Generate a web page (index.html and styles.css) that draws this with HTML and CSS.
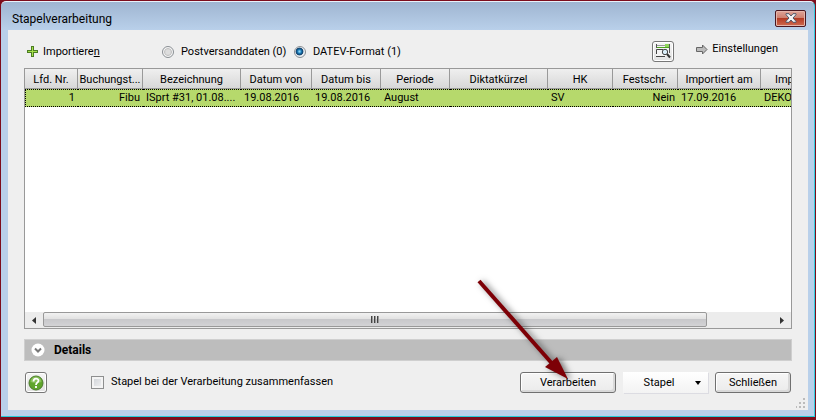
FILE: index.html
```html
<!DOCTYPE html>
<html lang="de">

<head>
    <meta charset="UTF-8">
    <meta name="viewport" content="width=device-width, initial-scale=1.0">
    <title>Stapelverarbeitung</title>
    <link rel="stylesheet" href="styles.css">
</head>

<body>
    <div class="window">
        <header class="titlebar">
            <h1 class="title">Stapelverarbeitung</h1>
            <button class="close" type="button" aria-label="Fenster schließen">
                <svg width="12" height="10" viewBox="0 0 12 10">
                    <path d="M1 .7h3L6 3 8 .7h3v1L8 5l3 3.3v1H8L6 7 4 9.300H1v-1L4 5 1 1.700z" fill="#f4f4f4" stroke="#50586a" stroke-width="1"/>
                </svg>
            </button>
        </header>
        <main class="client">
            <div class="toolbar">
                <button class="tool import" type="button">
                    <svg width="13" height="13" viewBox="0 0 13 13">
                        <path d="M5 1h3v4h4v3H8v4H5V8H1V5h4z" fill="#4c7d22"/>
                        <path d="M6 2h1v4h4v1H7v4H6V7H2V6h4z" fill="#a5e04a"/>
                    </svg>
                    <span>Importiere<u>n</u></span>
                </button>
                <label class="option post"><input type="radio" name="format">Postversanddaten (0)</label>
                <label class="option"><input type="radio" name="format" checked>DATEV-Format (1)</label>
                <button class="icon-button preview" type="button" aria-label="Vorschau">
                    <svg width="16" height="15" viewBox="0 0 16 15">
                        <path d="M1 1h13v11H1z" fill="#f4f4f4"/>
                        <path d="M1.500 0v4M14.500 0v9" stroke="#555" fill="none"/>
                        <path d="M2 1.500h8" stroke="#999"/>
                        <path d="M10 0h4v3h-4z" fill="#8fd65a"/>
                        <path d="M2 3.500h12" stroke="#4ca31e"/>
                        <path d="M1.500 10V5.500H8M1 12.500h9" stroke="#444" fill="none"/>
                        <circle cx="10" cy="8" r="2.700" fill="#d9edf8" stroke="#444"/>
                        <path d="M12 10l3 3.500" stroke="#333" stroke-width="2"/>
                    </svg>
                </button>
                <button class="tool settings" type="button">
                    <svg width="12" height="11" viewBox="0 0 12 11">
                        <path d="M.5 3.500h6V1L11 5.500 6.500 10V7.500h-6z" fill="#bbb" stroke="#666"/>
                    </svg>
                    <span>Einstellungen</span>
                </button>
            </div>

            <div class="list">
                <div class="list-body">
                    <table class="grid">
                        <colgroup>
                            <col class="w-nr"><col class="w-s"><col class="w-l"><col class="w-from"><col class="w-m"><col class="w-m">
                            <col class="w-l"><col class="w-s"><col class="w-s"><col class="w-date"><col class="w-l">
                        </colgroup>
                        <thead>
                            <tr>
                                <th>Lfd. Nr.</th>
                                <th>Buchungst...</th>
                                <th>Bezeichnung</th>
                                <th>Datum von</th>
                                <th>Datum bis</th>
                                <th>Periode</th>
                                <th>Diktatkürzel</th>
                                <th>HK</th>
                                <th>Festschr.</th>
                                <th>Importiert am</th>
                                <th>Importiert von</th>
                            </tr>
                        </thead>
                        <tbody>
                            <tr>
                                <td class="right">1</td>
                                <td class="right">Fibu</td>
                                <td>ISprt #31, 01.08....</td>
                                <td>19.08.2016</td>
                                <td>19.08.2016</td>
                                <td>August</td>
                                <td></td>
                                <td>SV</td>
                                <td class="right">Nein</td>
                                <td>17.09.2016</td>
                                <td>DEKO</td>
                            </tr>
                        </tbody>
                    </table>
                </div>
                <div class="scrollbar">
                    <button class="scroll-arrow" type="button" aria-label="Nach links">
                        <svg width="4" height="7" viewBox="0 0 4 7"><path d="M4 0v7L0 3.500z" fill="#333"/></svg>
                    </button>
                    <div class="track">
                        <div class="thumb"><i></i><i></i><i></i></div>
                    </div>
                    <button class="scroll-arrow" type="button" aria-label="Nach rechts">
                        <svg width="4" height="7" viewBox="0 0 4 7"><path d="M0 0v7l4-3.500z" fill="#333"/></svg>
                    </button>
                </div>
            </div>

            <button class="details" type="button">
                <svg width="14" height="14" viewBox="0 0 14 14">
                    <circle cx="7" cy="7" r="6.500" fill="#fff"/>
                    <path d="M4 5.500l3 3 3-3" fill="none" stroke="#777" stroke-width="2"/>
                </svg>
                Details
            </button>

            <footer class="footer">
                <button class="icon-button" type="button" aria-label="Hilfe">
                    <svg width="16" height="16" viewBox="0 0 16 16">
                        <circle cx="8" cy="8" r="7" fill="#5fa52b" stroke="#4b7a2c"/>
                        <path d="M2.500 7a5.500 5.500 0 0 1 11 0q-5.500 2-11 0" fill="#a4d279" opacity=".6"/>
                        <path d="M5.500 6.500c0-4 5-3.500 5-.7C10.500 7.700 8 7.500 8 10M8 11v2" fill="none" stroke="#fff" stroke-width="1.800"/>
                    </svg>
                </button>
                <label class="check"><input type="checkbox">Stapel bei der Verarbeitung zusammenfassen</label>
                <div class="actions">
                    <button class="button" type="button">
                        Verarbeiten
                        <!-- pointer drawn over the dialog, tip on the button label -->
                        <svg class="pointer" width="110" height="116" viewBox="0 0 110 116">
                            <path d="M5 6L82 93" stroke="#7d0006" stroke-width="4"/>
                            <path d="M71 92l12-10 11 22z" fill="#7d0006"/>
                        </svg>
                    </button>
                    <button class="button menu" type="button">
                        Stapel
                        <svg width="6" height="4" viewBox="0 0 6 4"><path d="M0 0h6L3 4z" fill="#000"/></svg>
                    </button>
                    <button class="button last" type="button">Schließen</button>
                </div>
                <svg class="grip" width="10" height="10" viewBox="0 0 10 10">
                    <path d="M7 0h2v2H7zM7 4h2v2H7zM7 8h2v2H7zM3 4h2v2H3zM3 8h2v2H3zM0 8h1v2H0z" fill="#bbb"/>
                </svg>
            </footer>
        </main>
    </div>
</body>

</html>
```

FILE: styles.css
```css
* {
    box-sizing: border-box;
}

body {
    margin: 0;
    background: #7d0d1c;
    color: #000;
    font: 11px/16px Roboto, "Liberation Sans", sans-serif;
}

button {
    padding: 0;
    border: 0;
    background: none;
    color: inherit;
    font: inherit;
}

svg {
    display: block;
    flex: none;
}

input {
    margin: 0;
    appearance: none;
}

.window {
    display: flex;
    flex-direction: column;
    min-height: calc(100vh - 4px);
    margin: 1px 1px 0;
    padding: 0 6px 6px 7px;
    border-top: 1px solid #e9f2fa;
    border-right: 1px solid #35cde0;
    border-bottom: 1px solid #25cbd8;
    border-radius: 5px 5px 0 0;
    background: linear-gradient(#9fb5d1, #b9d0ea 28px, #b9d0ea);
    box-shadow: 0 1px #000, 0 2px #999;
}

.titlebar {
    display: flex;
    justify-content: space-between;
    align-items: center;
    height: 28px;
    padding: 0 2px 0 4px;
}

.title {
    margin: 0;
    padding-top: 6px;
    font-size: 12px;
    font-weight: normal;
}

.close {
    display: flex;
    justify-content: center;
    align-items: center;
    width: 31px;
    height: 17px;
    margin-top: 4px;
    border: 1px solid #4a1720;
    border-radius: 2px;
    background: linear-gradient(#dfa497, #cd7d6d 48%, #b43b24 50%, #cf6b50);
    box-shadow: inset 0 0 0 1px #e5b5aa;
}

.client {
    display: flex;
    flex: 1;
    flex-direction: column;
    padding: 8px 16px 0;
    background: #efefef;
}

.toolbar {
    display: flex;
    align-items: center;
    height: 30px;
    padding: 0 14px 3px 2px;
}

.tool,
.option,
.check {
    display: flex;
    align-items: center;
    gap: 4px;
}

.import {
    width: 136px;
}

.option,
.check {
    gap: 7px;
}

.post {
    width: 132px;
}

.option input {
    width: 12px;
    height: 12px;
    border: 1px solid #8a8f94;
    border-radius: 50%;
    background: radial-gradient(#ddd 30%, #c5c5c5 50%, #f4f4f4 60%);
}

.option input:checked {
    background: radial-gradient(circle at 45% 45%, #8fd6f7 5%, #1878b4 25%, #103c66 45%, #e9eef2 55%);
}

.icon-button {
    display: flex;
    justify-content: center;
    align-items: center;
    width: 22px;
    height: 21px;
    border: 1px solid #777;
    border-radius: 3px;
    background: linear-gradient(#f5f5f5, #e2e2e2);
    box-shadow: inset 0 0 0 1px #fff;
}

.preview {
    margin-left: auto;
    margin-right: 22px;
}

.settings {
    padding-bottom: 5px;
}

.list {
    display: flex;
    flex: 1;
    flex-direction: column;
    border: 1px solid #999;
    background: #fff;
}

.list-body {
    flex: 1;
    overflow: hidden;
}

.grid {
    width: 834px;
    border-collapse: separate;
    border-spacing: 0;
    table-layout: fixed;
}

.w-nr {
    width: 53px;
}

.w-s {
    width: 65px;
}

.w-m {
    width: 69px;
}

.w-from {
    width: 71px;
}

.w-date {
    width: 83px;
}

.w-l {
    width: 98px;
}

.grid th,
.grid td {
    overflow: hidden;
    padding: 0 3px;
    font-weight: normal;
    text-align: left;
    text-overflow: ellipsis;
    white-space: nowrap;
}

.grid th {
    height: 20px;
    padding: 2px 1px 0;
    border-right: 1px solid #999;
    border-bottom: 1px solid #999;
    background: linear-gradient(#efefef, #d8d8d8);
    text-align: center;
}

.grid td {
    height: 18px;
    border-top: 1px dotted #000;
    border-bottom: 1px dotted #000;
    background: #b6d96c;
}

.grid td:first-child {
    border-left: 1px dotted #000;
}

.grid .right {
    text-align: right;
}

.scrollbar {
    display: flex;
    height: 16px;
    background: #ececec;
}

.scroll-arrow {
    display: flex;
    justify-content: center;
    align-items: center;
    width: 18px;
}

.track {
    flex: 1;
}

.thumb {
    display: flex;
    justify-content: center;
    align-items: center;
    gap: 1px;
    width: 91%;
    height: 15px;
    border: 1px solid #999;
    border-radius: 2px;
    background: linear-gradient(#f2f2f2, #e2e2e2 45%, #c8c8cb 50%, #d3d3d5);
}

.thumb i {
    width: 2px;
    height: 7px;
    border-left: 1px solid #444;
    background: #999;
}

.details {
    display: flex;
    align-items: center;
    gap: 9px;
    height: 22px;
    margin-top: 10px;
    padding-left: 6px;
    border: 1px solid #cfcfcf;
    background: #bdbdbd;
    font-size: 12px;
    font-weight: bold;
}

.footer {
    display: flex;
    position: relative;
    height: 49px;
    padding: 11px 1px 0;
}

.check {
    height: 20px;
    margin-left: 44px;
}

.check input {
    width: 13px;
    height: 13px;
    border: 1px solid #8e8f8f;
    background: linear-gradient(135deg, #cdd1d6, #f3f3f3);
    box-shadow: inset 0 0 0 2px #f4f4f4;
}

.actions {
    display: flex;
    gap: 7px;
    margin-left: auto;
}

.button {
    position: relative;
    width: 96px;
    height: 21px;
    border: 1px solid #707070;
    border-radius: 3px;
    background: linear-gradient(#f6f6f6, #ebebeb);
    box-shadow: inset 1px 1px #fff, inset -2px -2px #d9d9d9;
}

.menu {
    display: flex;
    justify-content: center;
    align-items: center;
    gap: 21px;
    width: 85px;
    padding-left: 14px;
    border: 0;
    border-radius: 0;
    background: linear-gradient(#fff, #f3f3f3);
    box-shadow: 1px 1px #dcdce2;
}

.last {
    width: 76px;
}

.pointer {
    position: absolute;
    left: -47px;
    top: -98px;
    z-index: 1;
    filter: drop-shadow(3px 1px 3px #0008);
    pointer-events: none;
}

.grip {
    position: absolute;
    right: -14px;
    bottom: 2px;
}
```
